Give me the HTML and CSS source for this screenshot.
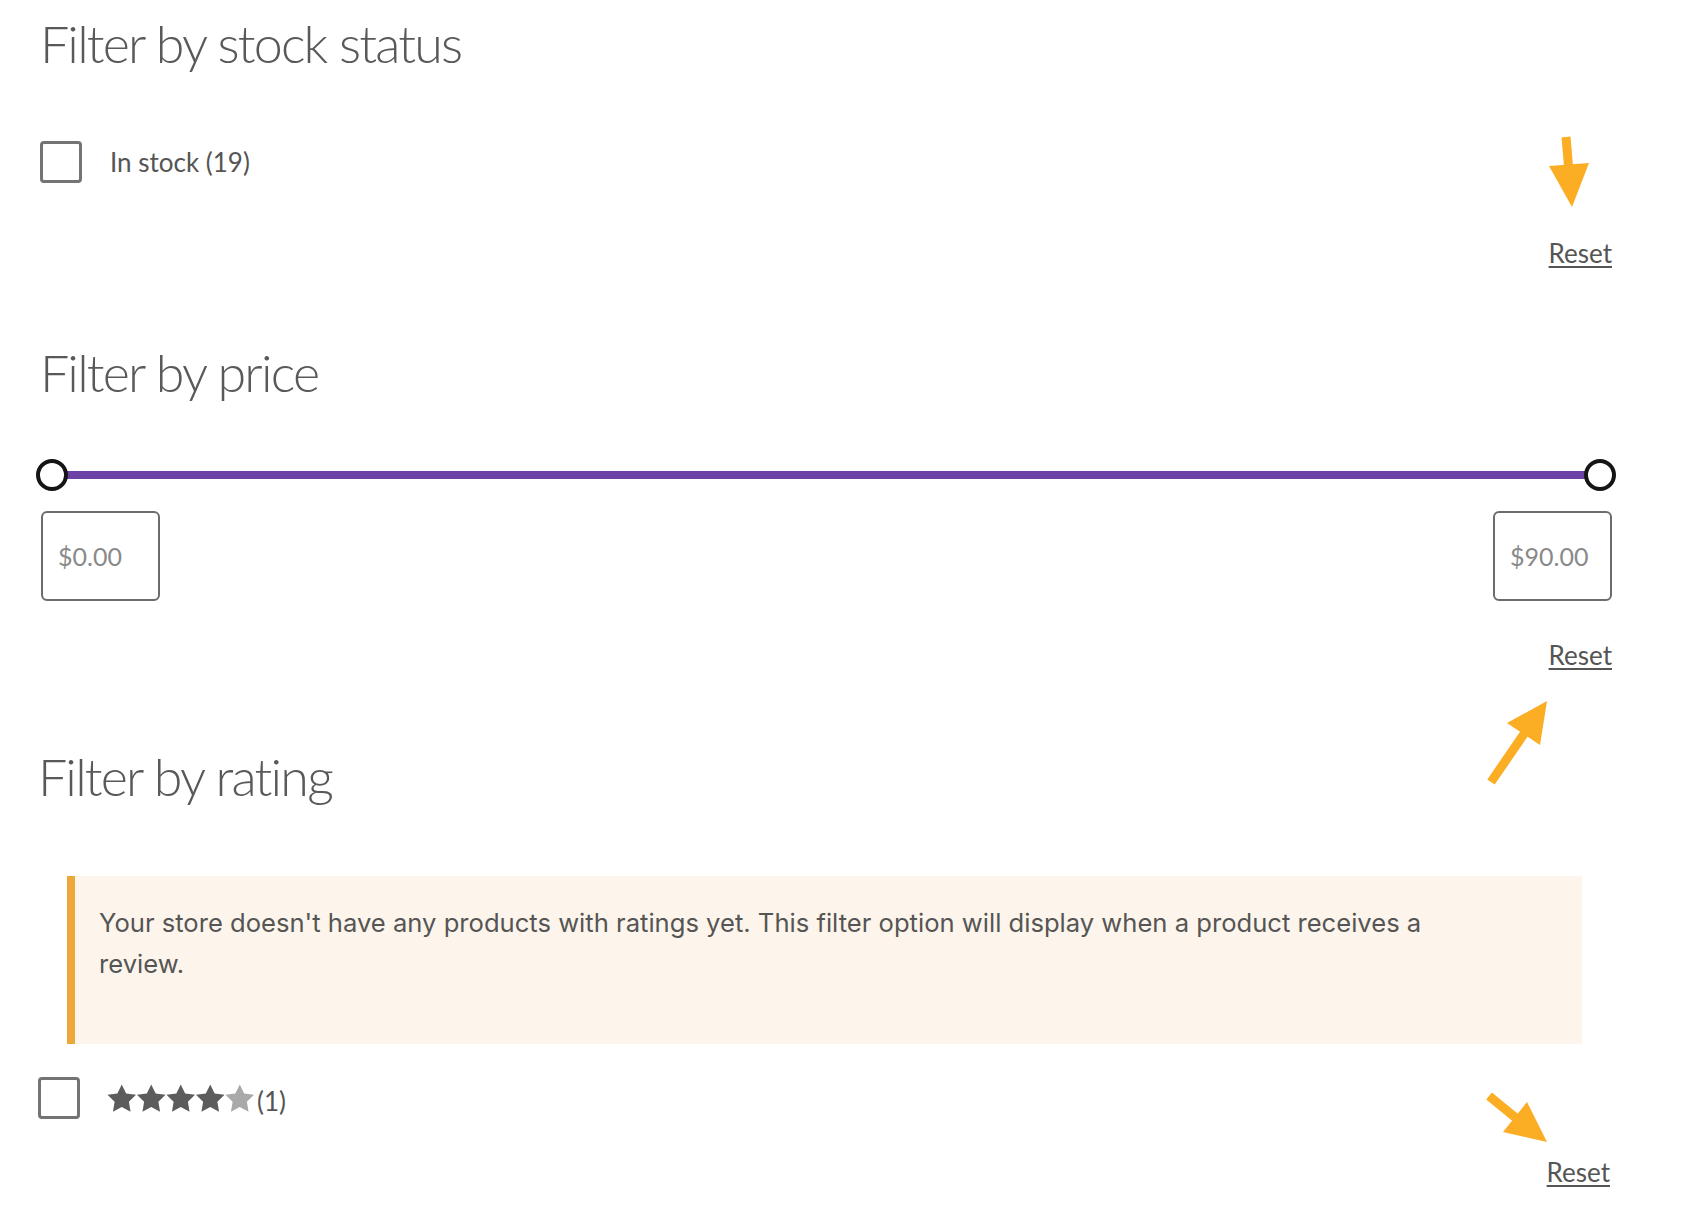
FILE: index.html
```html
<!DOCTYPE html>
<html lang="en">
<head>
<meta charset="utf-8">
<title>Filters</title>
<link rel="stylesheet" href="styles.css">
</head>
<body>
<div class="page">
  <section class="filter filter-stock">
    <h2 class="filter-title">Filter by stock status</h2>
    <div class="option">
      <span class="checkbox"></span>
      <span class="option-label">In stock (19)</span>
    </div>
    <div class="reset-row reset-row-stock"><a class="reset" href="#">Reset</a></div>
  </section>

  <section class="filter filter-price">
    <h2 class="filter-title">Filter by price</h2>
    <div class="slider">
      <div class="slider-track"></div>
      <span class="slider-handle slider-handle-min"></span>
      <span class="slider-handle slider-handle-max"></span>
    </div>
    <div class="price-inputs">
      <div class="price-box">$0.00</div>
      <div class="price-box">$90.00</div>
    </div>
    <div class="reset-row reset-row-price"><a class="reset" href="#">Reset</a></div>
  </section>

  <section class="filter filter-rating">
    <h2 class="filter-title">Filter by rating</h2>
    <div class="notice">
      <p class="notice-text">Your store doesn't have any products with ratings yet. This filter option will display when a product receives a review.</p>
    </div>
    <div class="option option-rating">
      <span class="checkbox"></span>
      <svg class="stars" width="148" height="29" viewBox="0 0 148 29" aria-label="Rated 4 out of 5">
        <defs>
          <polygon id="star" points="14.75,0.5 19.16,9.43 29.02,10.87 21.88,17.82 23.57,27.64 14.75,23 5.93,27.64 7.62,17.82 0.48,10.87 10.34,9.43"/>
        </defs>
        <use class="star-on" href="#star"/>
        <use class="star-on" href="#star" x="29.5"/>
        <use class="star-on" href="#star" x="59"/>
        <use class="star-on" href="#star" x="88.5"/>
        <use class="star-off" href="#star" x="118"/>
      </svg>
      <span class="rating-count">(1)</span>
    </div>
    <div class="reset-row reset-row-rating"><a class="reset" href="#">Reset</a></div>
  </section>

  <svg class="annotations" width="1702" height="1228" viewBox="0 0 1702 1228" aria-hidden="true">
    <g class="arrow">
      <line x1="1566" y1="137" x2="1569" y2="172"/>
      <polygon points="1549,166 1589,163 1572,207"/>
    </g>
    <g class="arrow">
      <line x1="1491" y1="782" x2="1526" y2="731"/>
      <polygon points="1507,723 1540,745 1547,701"/>
    </g>
    <g class="arrow">
      <line x1="1489" y1="1096" x2="1516" y2="1118"/>
      <polygon points="1503,1132 1527,1102 1547,1142"/>
    </g>
  </svg>
</div>
</body>
</html>
```

FILE: styles.css
```css
html, body {
  margin: 0;
  padding: 0;
  background: #ffffff;
}

.page {
  position: relative;
  width: 1702px;
  min-height: 1228px;
  padding: 0 0 0 40px;
  box-sizing: border-box;
  color: #555555;
}

.filter {
  width: 1572px;
  display: flex;
  flex-direction: column;
}

.filter-title {
  margin: 0;
  font-family: "Lato", "Open Sans", sans-serif;
  font-weight: 300;
  font-size: 52px;
  letter-spacing: -1.8px;
  font-variant-ligatures: none;
  line-height: 64px;
  height: 64px;
  color: #595959;
  white-space: nowrap;
}

.filter-stock .filter-title {
  margin-top: 11px;
}

.filter-price .filter-title {
  margin-top: 71px;
}

.filter-rating {
  margin-left: -2px;
}

.filter-rating .filter-title {
  margin-top: 73px;
}

/* option rows */
.option {
  display: flex;
  align-items: center;
  height: 42px;
  margin-top: 66px;
}

.checkbox {
  width: 42px;
  height: 42px;
  box-sizing: border-box;
  border: 3px solid #747474;
  border-radius: 4px;
  background: #ffffff;
  flex: none;
}

.option-label {
  margin-left: 28px;
  font-family: "Lato", "Open Sans", sans-serif;
  font-size: 26px;
  line-height: 42px;
  color: #555555;
}

.option-rating {
  margin-top: 33px;
}

.stars {
  margin-left: 27px;
  display: block;
}

.star-on {
  fill: #5c5c5c;
}

.star-off {
  fill: #a9a9a9;
}

.rating-count {
  margin-left: 2px;
  font-family: "Lato", "Open Sans", sans-serif;
  font-size: 26px;
  line-height: 42px;
  color: #555555;
  position: relative;
  top: 3px;
}

/* reset links */
.reset-row {
  display: flex;
  justify-content: flex-end;
  height: 32px;
}

.reset {
  font-family: "Lato", sans-serif;
  font-size: 26px;
  line-height: 32px;
  color: #555555;
  text-decoration: underline;
  text-decoration-thickness: 2px;
  text-underline-offset: 3px;
}

.reset-row-stock {
  margin-top: 54px;
}

.reset-row-price {
  margin-top: 38px;
}

.reset-row-rating {
  margin-top: 37px;
}

/* price slider */
.slider {
  position: relative;
  height: 32px;
  margin-top: 55px;
  margin-left: -4px;
  width: 1580px;
}

.slider-track {
  position: absolute;
  left: 16px;
  right: 16px;
  top: 12px;
  height: 8px;
  background: #6d42a6;
}

.slider-handle {
  position: absolute;
  top: 0;
  width: 32px;
  height: 32px;
  box-sizing: border-box;
  border: 4px solid #151515;
  border-radius: 50%;
  background: #ffffff;
}

.slider-handle-min {
  left: 0;
}

.slider-handle-max {
  right: 0;
}

.price-inputs {
  display: flex;
  justify-content: space-between;
  margin-top: 20px;
  margin-left: 1px;
  width: 1571px;
}

.price-box {
  width: 119px;
  height: 90px;
  box-sizing: border-box;
  border: 2px solid #6c6c6c;
  border-radius: 6px;
  padding-left: 15px;
  display: flex;
  align-items: center;
  font-family: "Lato", "Open Sans", sans-serif;
  font-size: 25px;
  color: #8a8a8a;
}

/* notice */
.notice {
  margin-top: 68px;
  margin-left: 29px;
  width: 1515px;
  height: 168px;
  box-sizing: border-box;
  background: #fdf5eb;
  border-left: 8px solid #eca93a;
  padding: 26px 0 0 24px;
}

.notice-text {
  margin: 0;
  max-width: 1380px;
  font-family: "Inter", "Roboto", sans-serif;
  font-size: 25.6px;
  line-height: 41px;
  color: #555555;
}

/* annotation arrows */
.annotations {
  position: absolute;
  top: 0;
  left: 0;
  pointer-events: none;
}

.arrow line {
  stroke: #fbad23;
  stroke-width: 9;
}

.arrow polygon {
  fill: #fbad23;
}
```
